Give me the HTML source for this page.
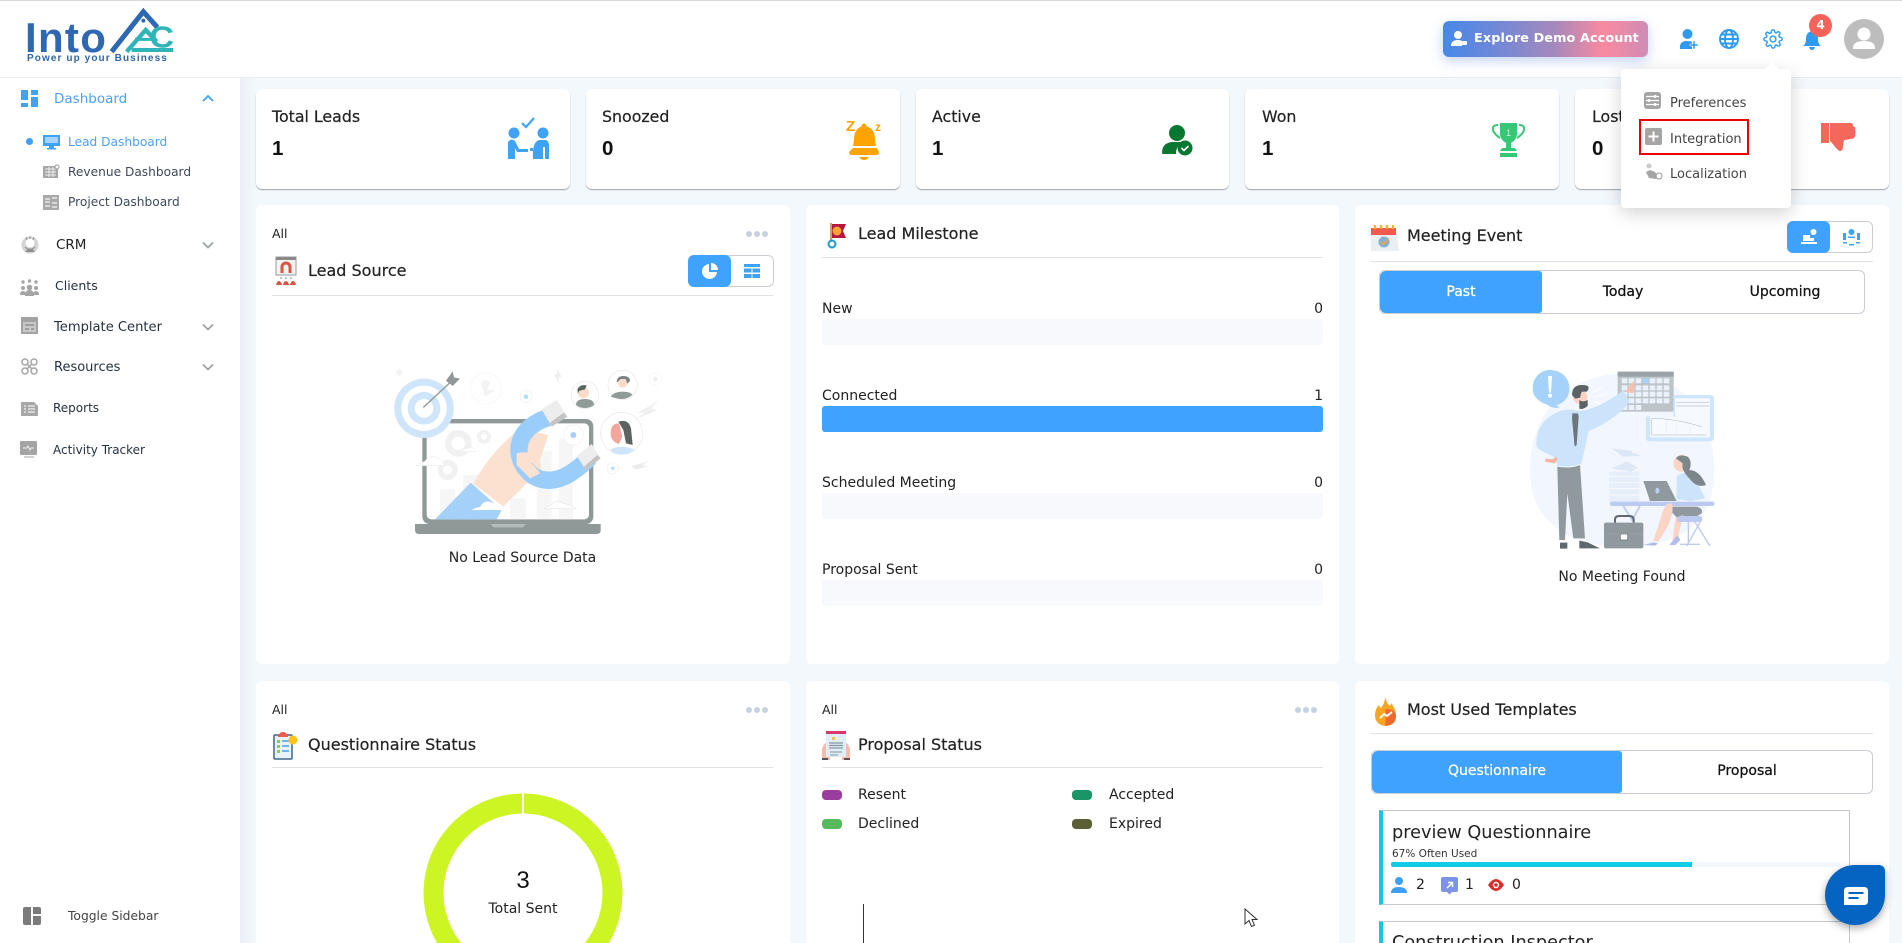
<!DOCTYPE html>
<html><head><meta charset="utf-8"><style>
html,body{margin:0;padding:0;width:1902px;height:943px;overflow:hidden;background:#fff;font-family:"DejaVu Sans","Liberation Sans",sans-serif;color:#222}
*{box-sizing:border-box}
#w{position:relative;width:1902px;height:943px;overflow:hidden;background:#fff}
.a{position:absolute}
.t{position:absolute;line-height:20px;height:20px;white-space:nowrap;font-size:13px;color:#222}
.card{position:absolute;background:#fff;border-radius:6px}
.stat{box-shadow:0 1px 1px #9aa3ad;top:89px;height:100px;width:314px}
.hr{position:absolute;height:1px;background:#dfe2e6}
.lbl{font-size:15.8px;-webkit-text-stroke:.2px #222}
.num{font:700 20.5px/20px "Liberation Sans",sans-serif;color:#111}
.ttl{font-size:16px;-webkit-text-stroke:.2px #222}
.m{font-size:14px}
.md{font-size:14px;-webkit-text-stroke:.25px currentColor}
.g{color:#3f4a5a;font-size:12.2px}
.bar{position:absolute;left:822px;width:501px;height:26px;background:#f7f9fd;border-radius:3px}
svg{position:absolute;overflow:visible}
.dots i{position:absolute;width:6px;height:6px;border-radius:50%;background:#c5d1e0;top:0}
</style></head><body><div id="w">
<div class="a" style="left:0;top:0;width:1902px;height:1px;background:#d8d8d8"></div>
<div class="a" style="left:0;top:77px;width:1902px;height:1px;background:#e9edf1"></div>
<div class="a" style="left:240px;top:78px;width:1662px;height:865px;background:linear-gradient(90deg,#ebf0f7 0,#f3f8fd 16px)"></div>

<!-- logo -->
<div class="t" style="left:25px;top:18px;height:40px;font:700 42px/40px 'Liberation Sans',sans-serif;color:#2e68b2;letter-spacing:1.3px">Into</div>
<svg style="left:0;top:0" width="200" height="70" viewBox="0 0 600 210">
<path d="M335 155L430 35L472 82" fill="none" stroke="#2e68b2" stroke-width="15"/>
<path d="M380 155L437 90L470 125" fill="none" stroke="#2fb4b8" stroke-width="13"/>
<path d="M395 150H520" stroke="#2fb4b8" stroke-width="12"/>
<path d="M405 118H455" stroke="#2fb4b8" stroke-width="9"/>
<circle cx="430" cy="62" r="6" fill="#2e68b2"/>
<text x="448" y="143" font-family="Liberation Sans" font-weight="700" font-size="92" fill="#2fb4b8" textLength="74" lengthAdjust="spacingAndGlyphs">C</text>
</svg>
<div class="t" style="left:27px;top:49px;font:700 10px/20px 'Liberation Sans',sans-serif;letter-spacing:1.1px;color:#2e68a8">Power up your Business</div>

<!-- sidebar -->
<svg style="left:21px;top:90px" width="17" height="17" fill="#3fa2f5"><rect width="7" height="10"/><rect x="10" width="7" height="5"/><rect y="13" width="7" height="4"/><rect x="10" y="7" width="7" height="10"/></svg>
<div class="t" style="left:54px;top:89px;font-size:13.5px;color:#4da0f5">Dashboard</div>
<svg style="left:202px;top:94px" width="12" height="9"><path d="M1 7L6 2L11 7" fill="none" stroke="#3fa2f5" stroke-width="1.8"/></svg>
<div class="a" style="left:26px;top:138px;width:7px;height:7px;border-radius:50%;background:#3f9ff5"></div>
<svg style="left:43px;top:135px" width="17" height="15"><rect width="17" height="11" fill="#3fa2f5"/><rect x="2" y="2" width="13" height="6" fill="#a6d3fb"/><rect x="6" y="11" width="5" height="2" fill="#3fa2f5"/><rect x="4" y="13" width="9" height="1.5" fill="#3fa2f5"/></svg>
<div class="t" style="left:68px;top:132px;font-size:12.2px;color:#4da0f5">Lead Dashboard</div>
<svg style="left:43px;top:164px" width="17" height="16"><rect y="2" width="15" height="12" fill="#a5a5a5"/><path d="M2 5h11M2 8h11M2 11h11M6 3v10M10 3v10" stroke="#eee"/><circle cx="14" cy="3" r="2" fill="#fff" stroke="#999"/></svg>
<div class="t g" style="left:68px;top:162px">Revenue Dashboard</div>
<svg style="left:43px;top:195px" width="16" height="15"><rect width="16" height="15" fill="#a9a9a9"/><path d="M2 4h5M2 7h5M2 11h5M9 3h5M9 8h5M9 12h5" stroke="#e8e8e8" stroke-width="1.5"/></svg>
<div class="t g" style="left:68px;top:192px">Project Dashboard</div>

<svg style="left:21px;top:235px" width="18" height="20"><circle cx="9" cy="10" r="8.5" fill="#d4d4d4"/><circle cx="9" cy="8" r="4.5" fill="#fff"/><path d="M4 17q5-7 10 0" fill="#8e8e8e"/><path d="M5 2l1 3M9 1v3M13 2l-1 3" stroke="#8e8e8e"/><path d="M4 12q5 5 10 0" fill="none" stroke="#8e8e8e"/></svg>
<div class="t" style="left:56px;top:235px;font-size:13.5px;color:#222">CRM</div>
<svg style="left:20px;top:277px" width="19" height="19" fill="#a5a5a5"><circle cx="3" cy="5" r="1.700"/><circle cx="9.500" cy="4" r="1.700"/><circle cx="16" cy="5" r="1.700"/><circle cx="3" cy="11" r="2"/><circle cx="16" cy="11" r="2"/><circle cx="9.500" cy="10.500" r="2.800"/><path d="M0 18q0-4 3-4t3 4zM13 18q0-4 3-4t3 4zM5 19q0-6 4.500-6t4.500 6z"/></svg>
<div class="t" style="left:55px;top:276px;font-size:12.5px;color:#263140">Clients</div>
<svg style="left:21px;top:317px" width="17" height="17"><rect width="17" height="17" rx="1" fill="#a2a2a2"/><rect x="2" y="5" width="13" height="10" fill="#c8c8c8"/><path d="M4 8h9M4 12h4M10 12h3" stroke="#8f8f8f" stroke-width="1.500"/></svg>
<div class="t" style="left:54px;top:318px;font-size:13.1px;color:#263140">Template Center</div>
<svg style="left:21px;top:358px" width="17" height="17" fill="none" stroke="#a5a5a5" stroke-width="1.500"><circle cx="4" cy="4" r="3"/><circle cx="13" cy="4" r="3"/><circle cx="4" cy="13" r="3"/><circle cx="13" cy="13" r="3"/><path d="M6 6l5 5M11 6l-5 5"/></svg>
<div class="t" style="left:54px;top:358px;font-size:13px;color:#263140">Resources</div>
<svg style="left:21px;top:401px" width="17" height="15"><path d="M0 1h13l4 4v10H0z" fill="#a8a8a8"/><path d="M3 5h2M7 5h7M3 8h2M7 8h7M3 11h2M7 11h7" stroke="#f0f0f0" stroke-width="1.300"/></svg>
<div class="t" style="left:53px;top:398px;font-size:12px;color:#263140">Reports</div>
<svg style="left:20px;top:441px" width="18" height="18"><rect width="17" height="14" rx="1" fill="#a4a4a4"/><path d="M3 7h4l1-2 2 4 1-2h3" fill="none" stroke="#eee"/><rect x="4" y="15" width="10" height="2" fill="#d0d0d0"/></svg>
<div class="t" style="left:53px;top:440px;font-size:12px;color:#263140">Activity Tracker</div>
<svg style="left:202px;top:241px" width="12" height="9"><path d="M1 1.500L6 6.500L11 1.500" fill="none" stroke="#9aa0a6" stroke-width="1.700"/></svg>
<svg style="left:202px;top:323px" width="12" height="9"><path d="M1 1.500L6 6.500L11 1.500" fill="none" stroke="#9aa0a6" stroke-width="1.700"/></svg>
<svg style="left:202px;top:363px" width="12" height="9"><path d="M1 1.500L6 6.500L11 1.500" fill="none" stroke="#9aa0a6" stroke-width="1.700"/></svg>
<svg style="left:23px;top:907px" width="18" height="18" fill="#7b7b7b"><path d="M2 0h6v18H2q-2 0-2-2V2q0-2 2-2zM10 0h6q2 0 2 2v5h-8zM10 9h8v7q0 2-2 2h-6z"/></svg>
<div class="t" style="left:68px;top:906px;font-size:12.3px;color:#444">Toggle Sidebar</div>

<!-- header -->
<div class="a" style="left:1443px;top:21px;width:205px;height:36px;border-radius:6px;background:linear-gradient(90deg,#4689e8 0,#6f88d8 25%,#a689bb 55%,#f98aa0 78%,#cf8db6 100%);box-shadow:0 4px 12px rgba(90,130,220,.35)"></div>
<svg style="left:1450px;top:31px" width="18" height="16" fill="#fff"><circle cx="8" cy="4" r="4"/><path d="M1 15q0-6 7-6 3 0 4 1v5z"/><rect x="12" y="10" width="5" height="4" rx="1"/></svg>
<div class="t" style="left:1474px;top:29px;font-size:12.8px;font-weight:700;color:#fff;letter-spacing:.1px">Explore Demo Account</div>
<svg style="left:1679px;top:29px" width="20" height="20" fill="#2e9bf0"><circle cx="8.500" cy="5" r="5"/><path d="M1 20q-1-8 7-8 4 0 5 1v7z"/><path d="M14 12h2v3h3v2h-3v3h-2v-3h-3v-2h3z" stroke="#fff" stroke-width=".5"/></svg>
<svg style="left:1719px;top:29px" width="20" height="20" fill="none" stroke="#2e9bf0" stroke-width="1.900"><circle cx="10" cy="10" r="9"/><ellipse cx="10" cy="10" rx="4" ry="9"/><path d="M1 10h18M2.500 5.500h15M2.500 14.500h15"/></svg>
<svg style="left:1763px;top:29px" width="20" height="20" viewBox="0 0 24 24" fill="none" stroke="#2e9bf0" stroke-width="1.700"><circle cx="12" cy="12" r="3.500"/><path d="M19.400 15a1.600 1.600 0 0 0 .3 1.800l.1.100a2 2 0 1 1-2.800 2.800l-.1-.1a1.600 1.600 0 0 0-2.700 1.100V21a2 2 0 1 1-4 0v-.1a1.600 1.600 0 0 0-2.700-1.100l-.1.100a2 2 0 1 1-2.800-2.800l.1-.1a1.600 1.600 0 0 0-1.100-2.700H3a2 2 0 1 1 0-4h.1a1.600 1.600 0 0 0 1.100-2.700l-.1-.1a2 2 0 1 1 2.800-2.800l.1.100a1.600 1.600 0 0 0 1.800.3H9a1.600 1.600 0 0 0 1-1.500V3a2 2 0 1 1 4 0v.1a1.600 1.600 0 0 0 2.700 1.100l.1-.1a2 2 0 1 1 2.800 2.800l-.1.100a1.600 1.600 0 0 0-.3 1.800V9a1.600 1.600 0 0 0 1.500 1H21a2 2 0 1 1 0 4h-.1a1.600 1.600 0 0 0-1.500 1z"/></svg>
<svg style="left:1803px;top:31px" width="18" height="19" fill="#2e9bf0"><path d="M9 0q6 1 6 8 0 5 3 7H0q3-2 3-7 0-7 6-8z"/><path d="M6 16h6q-1 3-3 3t-3-3z"/></svg>
<div class="a" style="left:1809px;top:14px;width:23px;height:23px;border-radius:50%;background:#f4625a;color:#fff;font-size:12px;font-weight:700;text-align:center;line-height:23px">4</div>
<svg style="left:1844px;top:19px" width="40" height="40"><circle cx="20" cy="20" r="20" fill="#bdbdbd"/><circle cx="20" cy="15" r="6.500" fill="#fff"/><path d="M9 29q0-7 11-7t11 7v1H9z" fill="#fff"/></svg>

<!-- stats -->
<div class="card stat" style="left:256px"></div>
<div class="card stat" style="left:586px"></div>
<div class="card stat" style="left:916px;width:313px"></div>
<div class="card stat" style="left:1245px"></div>
<div class="card stat" style="left:1575px"></div>
<div class="t lbl" style="left:272px;top:107px">Total Leads</div><div class="t num" style="left:272px;top:139px">1</div>
<div class="t lbl" style="left:602px;top:107px">Snoozed</div><div class="t num" style="left:602px;top:139px">0</div>
<div class="t lbl" style="left:932px;top:107px">Active</div><div class="t num" style="left:932px;top:139px">1</div>
<div class="t lbl" style="left:1262px;top:107px">Won</div><div class="t num" style="left:1262px;top:139px">1</div>
<div class="t lbl" style="left:1592px;top:107px">Lost</div><div class="t num" style="left:1592px;top:139px">0</div>
<svg style="left:508px;top:117px" width="42" height="43" fill="#3fa2f5"><circle cx="6" cy="16" r="5.500"/><circle cx="35" cy="16" r="5.500"/><path d="M0 25l2-2q3-1 5 1l4 8h9v3H9l-2-4v11H0z"/><path d="M25 42q-1-17 6-19h7q3 1 3 6v13h-4V30h-2v12z"/><rect x="22" y="31" width="3" height="3"/><path d="M14 6l4 4 8-9" fill="none" stroke="#3fa2f5" stroke-width="2.200"/></svg>
<svg style="left:846px;top:118px" width="37" height="44" fill="#ffa300"><path d="M18 8q11 1 11 14l1 6H7l1-6q0-13 10-14z"/><path d="M7 30h24l2 4q0 3-3 3H6q-3 0-3-3z"/><path d="M13 39h10q-2 3-5 3t-5-3z"/><circle cx="18" cy="8" r="2.500"/><text x="0" y="13" font-family="Liberation Sans" font-weight="700" font-size="15">Z</text><text x="29" y="13" font-family="Liberation Sans" font-weight="700" font-size="12">z</text></svg>
<svg style="left:1162px;top:125px" width="32" height="31" fill="#087830"><circle cx="15" cy="8" r="8"/><path d="M0 28q0-10 10-11h10q-6 4-6 12H2q-2 0-2-1z"/><circle cx="23" cy="23" r="7.500"/><path d="M19.500 23l2.500 2.500 4.500-4.500" fill="none" stroke="#fff" stroke-width="1.600"/></svg>
<svg style="left:1492px;top:123px" width="33" height="35" fill="#35c874"><path d="M8 0h17v10q0 8-8.500 11Q8 18 8 10z"/><path d="M6 2Q0 2 1 7q1 4 7 8M27 2q6 0 5 5-1 4-7 8" fill="none" stroke="#35c874" stroke-width="2"/><rect x="14" y="20" width="5" height="5"/><path d="M10 25h13l2 3H8z"/><rect x="8" y="30" width="17" height="4"/><text x="16.500" y="13" font-size="9" text-anchor="middle" fill="#c8f5d8" font-family="Liberation Sans">1</text></svg>
<svg style="left:1821px;top:123px" width="35" height="35" fill="#f4685c"><rect width="8" height="20"/><path d="M9 0h21q2 0 2 3 3 1 2 4 1 2 0 4 1 2-1 4-1 1-10 2l-1 6q0 5-3 5-2 0-8-8-2-2-2-3z"/></svg>

<!-- row 2 cards -->
<div class="card" style="left:256px;top:205px;width:534px;height:459px"></div>
<div class="card" style="left:806px;top:205px;width:533px;height:459px"></div>
<div class="card" style="left:1355px;top:205px;width:534px;height:459px"></div>

<!-- lead source -->
<div class="t" style="left:272px;top:224px;font-size:12.500px">All</div>
<div class="dots a" style="left:746px;top:231px"><i style="left:0"></i><i style="left:8px"></i><i style="left:16px"></i></div>
<svg style="left:276px;top:257px" width="20" height="28"><rect width="20" height="18" fill="#f3f3f3" stroke="#999"/><rect width="20" height="3" fill="#888"/><path d="M6 16v-6a4 4 0 0 1 8 0v6" fill="none" stroke="#d8553f" stroke-width="3"/><path d="M0 28q1-4 3-4t3 4zM7 28q1-4 3-4t3 4zM14 28q1-4 3-4t3 4z" fill="#d8553f"/><path d="M5 20v2M10 20v2M15 20v2" stroke="#888"/></svg>
<div class="t ttl" style="left:308px;top:261px">Lead Source</div>
<div class="a" style="left:688px;top:255px;width:86px;height:32px;border:1px solid #c9ced4;border-radius:6px"></div>
<div class="a" style="left:688px;top:255px;width:43px;height:32px;background:#3fa2ff;border-radius:6px"></div>
<svg style="left:702px;top:263px" width="16" height="16" fill="#fff"><path d="M7 1a7.500 7.500 0 1 0 8 8H7z"/><path d="M9 0a7 7 0 0 1 7 7H9z"/></svg>
<svg style="left:744px;top:264px" width="16" height="14" fill="#3fa2f5"><rect width="16" height="3"/><rect y="4.500" width="7.500" height="4"/><rect x="8.500" y="4.500" width="7.500" height="4"/><rect y="10" width="7.500" height="4"/><rect x="8.500" y="10" width="7.500" height="4"/></svg>
<div class="hr" style="left:272px;top:295px;width:501px"></div>

<svg style="left:360px;top:350px" width="320" height="230" viewBox="0 0 960 690">
<rect x="187" y="207" width="513" height="315" rx="22" fill="#8f9997"/><rect x="200" y="220" width="487" height="288" rx="14" fill="#fff"/>
<rect x="240" y="418" width="45" height="90" fill="#f6f6f6"/><rect x="310" y="375" width="45" height="133" fill="#f6f6f6"/><rect x="450" y="445" width="48" height="63" fill="#f6f6f6"/><rect x="530" y="305" width="45" height="203" fill="#f6f6f6"/><rect x="597" y="265" width="42" height="243" fill="#f6f6f6"/>
<circle cx="295" cy="280" r="30" fill="none" stroke="#f1f1f1" stroke-width="20"/><circle cx="372" cy="260" r="15" fill="none" stroke="#f1f1f1" stroke-width="12"/><circle cx="263" cy="360" r="22" fill="none" stroke="#f1f1f1" stroke-width="16"/>
<path d="M165 522h557v18q0 12-12 12H177q-12 0-12-12z" fill="#8f9997"/><path d="M392 522h105l-8 10h-88z" fill="#b3bcba"/>
<path d="M225 508L332 398L425 480L410 508z" fill="#a4d0fa"/>
<path d="M340 400C370 350 400 300 480 235L565 255L540 330L545 370L500 400L430 470z" fill="#fde1d0"/>
<path d="M575 200C470 225 445 320 520 378C585 415 645 365 690 322" fill="none" stroke="#9bcdfb" stroke-width="52"/>
<path d="M590 150L622 200L575 230L545 178z" fill="#ededed"/><path d="M622 200L575 230L570 218L612 188z" fill="#c4c4c4"/>
<path d="M695 282L722 325L678 360L650 318z" fill="#ededed"/><path d="M722 325L678 360L672 350L712 315z" fill="#c4c4c4"/>
<path d="M470 310q30-8 50 5l-5 25q15 15 25 30l-30 15-40-40z" fill="#fde1d0"/>
<circle cx="192" cy="175" r="89" fill="#cfe5fb"/><circle cx="192" cy="175" r="68" fill="#fff"/><circle cx="192" cy="175" r="49" fill="#cfe5fb"/><circle cx="192" cy="175" r="28" fill="#fff"/>
<path d="M190 172L270 98" stroke="#8f9997" stroke-width="4"/><path d="M258 92L278 64L282 82L300 86L278 108z" fill="#8f9997"/>
<circle cx="378" cy="115" r="47" fill="none" stroke="#f6f6f6" stroke-width="2"/><path d="M362 100a15 15 0 0 1 28 0l-10 20 25 0-30 20z" fill="#f3f3f3"/>
<circle cx="498" cy="140" r="18" fill="none" stroke="#eee" stroke-width="2"/><circle cx="498" cy="140" r="7" fill="#b9dcfb"/>
<circle cx="640" cy="255" r="30" fill="#fff" stroke="#eee" stroke-width="2"/><circle cx="640" cy="255" r="9" fill="#a4d0fa"/>
<circle cx="758" cy="355" r="17" fill="#fff" stroke="#eee" stroke-width="2"/><circle cx="758" cy="355" r="5" fill="#b9dcfb"/>
<circle cx="886" cy="87" r="18" fill="#fff" stroke="#f5f5f5" stroke-width="2"/><circle cx="886" cy="87" r="7" fill="#f0f0f0"/>
<path d="M118 55l12 12-12 12-12-12z" fill="#f3f3f3"/>
<path d="M590 55l15 25-10 5 5 20-18-30 10-3z" fill="#efefef"/><path d="M830 190l65-38-22 24 20 5-62 25 22-18z" fill="#f0f0f0"/><path d="M815 348l50-14-18 12 18 4-40 8z" fill="#ececec"/>
<circle cx="675" cy="135" r="41" fill="#fff" stroke="#e6e6e6" stroke-width="2"/><path d="M648 165q0-18 27-18t27 18q-12 9-27 9t-27-9z" fill="#919c99"/><circle cx="670" cy="128" r="17" fill="#fbdccb"/><path d="M652 120q5-18 28-14l-5 12-18 5-3 8z" fill="#5c6462"/>
<circle cx="788" cy="105" r="44" fill="#fff" stroke="#e6e6e6" stroke-width="2"/><path d="M752 140q10-15 35-15t30 10q-15 12-30 12t-35-7z" fill="#919c99"/><circle cx="788" cy="98" r="15" fill="#fbdccb"/><path d="M770 98q0-20 20-20t20 15l-8 8-5-14-15 0z" fill="#7b8482"/>
<circle cx="785" cy="250" r="63" fill="#fff" stroke="#e6e6e6" stroke-width="2"/><path d="M750 300q30-20 75 0-20 14-40 14t-35-14z" fill="#cfe5fb"/><path d="M752 250q0-30 25-30l10 40-10 22q-25-8-25-32z" fill="#f3a79c"/><path d="M775 215q30-10 38 20l5 50-20-5-8-40z" fill="#5c6462"/>
<path d="M168 347q10-10 25-12 15-22 40-12 15 5 22 24z" fill="#fff" stroke="#e5e5e5" stroke-width="1.500"/>
<path d="M335 480q12-8 25-9 15-28 42-10 15 5 28 19z" fill="#fff"/>
<path d="M552 476q10-8 20-9 15-22 35-8 25 5 42 17z" fill="#fff" stroke="#e0e0e0" stroke-width="1.500"/>
<path d="M300 305q10-10 20-8 15-14 28 8z" fill="#fff" stroke="#e8e8e8" stroke-width="1.500"/>
</svg>
<div class="t m" style="left:272px;top:548px;width:501px;text-align:center">No Lead Source Data</div>

<!-- milestone -->
<svg style="left:828px;top:222px" width="18" height="27"><path d="M3 1v19" stroke="#c9a06c" stroke-width="2"/><path d="M4 2h14l-3 7 3 7H4z" fill="#b8153f"/><circle cx="9" cy="9" r="4.500" fill="#f7a330"/><circle cx="4" cy="22" r="3.500" fill="none" stroke="#1d9ccc" stroke-width="2"/></svg>
<div class="t ttl" style="left:858px;top:224px">Lead Milestone</div>
<div class="hr" style="left:822px;top:257px;width:501px"></div>
<div class="t m" style="left:822px;top:299px">New</div><div class="t m" style="right:579px;top:299px">0</div><div class="bar" style="top:319px"></div>
<div class="t m" style="left:822px;top:386px">Connected</div><div class="t m" style="right:579px;top:386px">1</div><div class="bar" style="top:406px;background:#3fa2ff"></div>
<div class="t m" style="left:822px;top:473px">Scheduled Meeting</div><div class="t m" style="right:579px;top:473px">0</div><div class="bar" style="top:493px"></div>
<div class="t m" style="left:822px;top:560px">Proposal Sent</div><div class="t m" style="right:579px;top:560px">0</div><div class="bar" style="top:580px"></div>

<!-- meeting -->
<svg style="left:1371px;top:224px" width="28" height="27"><path d="M0 5h25l3 22H0z" fill="#eceff1"/><rect y="4" width="25" height="7" fill="#ef5a4c"/><path d="M4 5V1M10 5V1M16 5V1M22 5V1" stroke="#f2b233" stroke-width="2.400"/><circle cx="13" cy="18" r="5.500" fill="#7fb1dc"/><path d="M10 18l2.500 2.500 5-6" fill="none" stroke="#f2a533" stroke-width="1.700"/></svg>
<div class="t ttl" style="left:1407px;top:226px">Meeting Event</div>
<div class="a" style="left:1787px;top:221px;width:86px;height:32px;border:1px solid #c9ced4;border-radius:6px"></div>
<div class="a" style="left:1787px;top:221px;width:43px;height:32px;background:#3fa2ff;border-radius:6px"></div>
<svg style="left:1801px;top:229px" width="16" height="16" fill="#fff"><circle cx="12.500" cy="3" r="3"/><path d="M2 6h7v3h4v3H2z"/><rect y="13" width="16" height="2"/></svg>
<svg style="left:1843px;top:229px" width="17" height="17" fill="#3fa2f5"><circle cx="8.500" cy="3" r="3"/><rect y="4" width="3" height="7"/><rect x="14" y="4" width="3" height="7"/><rect x="5" y="7.500" width="7" height="1.500"/><path d="M0 13h4v1.500H0zM13 13h4v1.500h-4zM6 15h5v1.500H6z"/></svg>
<div class="hr" style="left:1371px;top:261px;width:502px"></div>
<div class="a" style="left:1379px;top:270px;width:486px;height:44px;border:1px solid #c9ced4;border-radius:6px"></div>
<div class="a" style="left:1380px;top:271px;width:162px;height:42px;background:#3fa2ff;border-radius:6px 3px 3px 6px"></div>
<div class="t md" style="left:1380px;top:282px;width:162px;text-align:center;color:#fff">Past</div>
<div class="t md" style="left:1542px;top:282px;width:162px;text-align:center;color:#111">Today</div>
<div class="t md" style="left:1704px;top:282px;width:162px;text-align:center;color:#111">Upcoming</div>

<svg style="left:1480px;top:350px" width="260" height="240" viewBox="0 0 780 720">
<path d="M150 360C150 170 280 70 440 70C610 70 703 200 703 360C703 520 600 590 430 590C270 590 150 520 150 360z" fill="#f2f6fe"/>
<path d="M208 60c35 0 60 22 60 55s-25 48-40 50l10 8c-15 2-28-2-38-10-25-8-42-25-42-48 0-33 25-55 50-55z" fill="#a4d2fb"/><path d="M204 78h12l-3 50h-6z" fill="#fff"/><circle cx="210" cy="137" r="6" fill="#fff"/>
<rect x="413" y="65" width="168" height="120" fill="#bcc4c8"/><rect x="413" y="65" width="168" height="15" fill="#9aa3a7"/>
<g fill="#eaf1fb"><rect x="425" y="85" width="17" height="15"/><rect x="446" y="85" width="17" height="15"/><rect x="467" y="85" width="17" height="15"/><rect x="488" y="85" width="17" height="15" fill="#a4d2fb"/><rect x="509" y="85" width="17" height="15"/><rect x="530" y="85" width="17" height="15"/><rect x="551" y="85" width="17" height="15"/>
<rect x="425" y="106" width="17" height="15"/><rect x="446" y="106" width="17" height="15"/><rect x="467" y="106" width="17" height="15"/><rect x="488" y="106" width="17" height="15"/><rect x="509" y="106" width="17" height="15"/><rect x="530" y="106" width="17" height="15"/><rect x="551" y="106" width="17" height="15"/>
<rect x="425" y="125" width="17" height="15"/><rect x="446" y="125" width="17" height="15"/><rect x="467" y="125" width="17" height="15"/><rect x="488" y="125" width="17" height="15"/><rect x="509" y="125" width="17" height="15"/><rect x="530" y="125" width="17" height="15"/><rect x="551" y="125" width="17" height="15"/>
<rect x="425" y="145" width="17" height="15"/><rect x="446" y="145" width="17" height="15"/><rect x="467" y="145" width="17" height="15"/><rect x="488" y="145" width="17" height="15"/><rect x="509" y="145" width="17" height="15"/><rect x="530" y="145" width="17" height="15"/><rect x="551" y="145" width="17" height="15"/>
<rect x="425" y="165" width="17" height="15"/><rect x="446" y="165" width="17" height="15"/><rect x="467" y="165" width="17" height="15"/></g>
<path d="M498 135H690q12 0 12 12V262q0 12-12 12H510q-12 0-12-12V200H580V135z" fill="#cde5fd"/><path d="M510 200H585V145H690V262H510z" fill="#f6faff"/>
<path d="M588 157h100M588 168h100" stroke="#b6bfd8" stroke-width="2"/><path d="M515 205v50h165M515 205q70 0 150 25" fill="none" stroke="#a4b0c5" stroke-width="1.500"/><path d="M560 205v50M590 215v40M630 222v33" stroke="#c7cfdd" stroke-dasharray="3 3"/>
<path d="M436 125l25-32 3 12-4 25z" fill="#f7c0b0"/>
<path d="M170 290C165 215 220 185 262 178L305 183C345 175 395 150 430 120L448 155C415 205 345 235 325 245L305 340C280 350 255 352 232 346L222 300L235 325L220 320C205 310 180 305 170 290z" fill="#cbe4fb"/>
<path d="M195 335l30 5 8-12-4-8-12 8-20-2z" fill="#f6b4a3"/>
<path d="M277 190h17l2 10-6 85-6 5-8-85z" fill="#6d777b"/>
<path d="M232 350C260 355 285 352 300 345L315 565H280L262 430L255 570H238z" fill="#8f999e"/>
<path d="M240 578h22v18h-22zM298 572l25 5 37 18h-62z" fill="#5f686c"/>
<circle cx="300" cy="140" r="22" fill="#fbd4c5"/><path d="M276 135q0-30 30-30t15 20h-15q-5 8-5 18l-15 3zM298 150q10 8 25 0v18q-15 12-25 8z" fill="#5a6266"/>
<path d="M335 130l30-18M340 142l38-10M340 156l25 4" stroke="#fff" stroke-width="3"/>
<path d="M395 295l65 8 20 15-50 2z" fill="#dce6f4"/><path d="M455 300q40 10 72-15-20 30-70 25z" fill="#f3f7fd"/>
<rect x="388" y="365" width="90" height="90" fill="#e6eef9"/><path d="M388 380h90M388 398h90M388 415h90M388 435h90" stroke="#fff" stroke-width="2"/><path d="M392 355l50-20 32 18-20 12z" fill="#dfe8f5"/>
<rect x="390" y="455" width="313" height="13" rx="6" fill="#bcc9f1"/><path d="M430 468l28 45M480 468l-25 45" stroke="#bcc9f1" stroke-width="5"/>
<path d="M490 393h70l30 60h-80z" fill="#8f999e"/><ellipse cx="532" cy="422" rx="6" ry="9" fill="#b9d2ef"/>
<path d="M590 380c15-18 50-15 60 15l25 50-40 8-45-5z" fill="#cbe4fb"/>
<path d="M560 470h90q20 5 15 20l-20 12-55 0z" fill="#8f999e"/>
<path d="M575 460q10 25-15 75l-25 40-15-3 20-60q5-25 20-50z" fill="#fbd4c5"/><path d="M610 495l-20 80-13-2 10-70z" fill="#fbd4c5"/>
<path d="M490 585l30-8 15 3-10 7zM568 585l25-30 8 15-15 15z" fill="#b2bce9"/>
<rect x="592" y="498" width="75" height="18" rx="8" fill="#bcc9f1"/><path d="M625 516v65M620 588l45-80M640 508l50 80M600 583h60" stroke="#bcc9f1" stroke-width="4"/>
<circle cx="605" cy="340" r="25" fill="#fbd4c5"/><path d="M588 325q10-15 35-5 15 15 5 40 30 0 50 45-28 10-50-20-25-25-20-45z" fill="#7c868b"/>
<rect x="372" y="518" width="118" height="77" rx="6" fill="#8f999e"/><path d="M405 518v-8q0-12 12-12h32q12 0 12 12v8" fill="none" stroke="#5f686c" stroke-width="6"/><rect x="421" y="552" width="22" height="18" fill="#fff" stroke="#5f686c" stroke-width="2"/><path d="M372 552h118" stroke="#c0c7cb" stroke-dasharray="3 3"/>
</svg>
<div class="t m" style="left:1355px;top:567px;width:534px;text-align:center">No Meeting Found</div>

<!-- row 3 -->
<div class="card" style="left:256px;top:681px;width:534px;height:270px"></div>
<div class="card" style="left:806px;top:681px;width:533px;height:270px"></div>
<div class="card" style="left:1355px;top:681px;width:534px;height:270px"></div>

<div class="t" style="left:272px;top:700px;font-size:12.500px">All</div>
<div class="dots a" style="left:746px;top:707px"><i style="left:0"></i><i style="left:8px"></i><i style="left:16px"></i></div>
<svg style="left:274px;top:731px" width="24" height="28"><rect y="4" width="18" height="24" rx="1" fill="#eaf3fb" stroke="#40658c" stroke-width="1.500"/><path d="M5 5q0-4 4-4t4 4z M4 3h10v3H4z" fill="#ef5a50"/><path d="M3 9h3v3H3zM3 14h3v3H3zM3 19h3v3H3z" fill="#8cc84b"/><path d="M8 10h7M8 15h7M8 20h7" stroke="#43a5e8" stroke-width="1.600"/><circle cx="19" cy="9" r="4.500" fill="#fcc419"/></svg>
<div class="t ttl" style="left:308px;top:735px">Questionnaire Status</div>
<div class="hr" style="left:272px;top:767px;width:501px"></div>
<svg style="left:420px;top:790px" width="206" height="153" viewBox="0 0 206 153"><circle cx="103" cy="103" r="89.500" fill="none" stroke="#cdf524" stroke-width="20"/><rect x="102" y="2" width="2" height="22" fill="#fff"/></svg>
<div class="t" style="left:423px;top:871px;width:200px;text-align:center;font:24px/20px 'Liberation Sans',sans-serif;color:#111">3</div>
<div class="t m" style="left:423px;top:899px;width:200px;text-align:center">Total Sent</div>

<div class="t" style="left:822px;top:700px;font-size:12.500px">All</div>
<div class="dots a" style="left:1295px;top:707px"><i style="left:0"></i><i style="left:8px"></i><i style="left:16px"></i></div>
<svg style="left:822px;top:731px" width="28" height="29"><path d="M0 18q2-6 5-7l3 6v12H0zM28 18q-2-6-5-7l-3 6v12h8z" fill="#f7bcae"/><rect x="4" y="1" width="20" height="25" fill="#dfeef9"/><rect x="4" y="0" width="20" height="3" fill="#d8396a"/><rect x="10" y="6" width="3" height="3" fill="#f2c14e"/><path d="M7 12h14M7 14.500h14M7 17h14" stroke="#8a949c" stroke-width="1.300"/><path d="M8 21h12M8 24h8" stroke="#8a949c"/><rect y="27" width="6" height="2" fill="#555"/><rect x="22" y="27" width="6" height="2" fill="#555"/></svg>
<div class="t ttl" style="left:858px;top:735px">Proposal Status</div>
<div class="hr" style="left:822px;top:767px;width:501px"></div>
<div class="a" style="left:822px;top:790px;width:20px;height:10px;border-radius:4px;background:#993d9f"></div><div class="t m" style="left:858px;top:785px">Resent</div>
<div class="a" style="left:1072px;top:790px;width:20px;height:10px;border-radius:4px;background:#1b9468"></div><div class="t m" style="left:1109px;top:785px">Accepted</div>
<div class="a" style="left:822px;top:819px;width:20px;height:10px;border-radius:4px;background:#57b95d"></div><div class="t m" style="left:858px;top:814px">Declined</div>
<div class="a" style="left:1072px;top:819px;width:20px;height:10px;border-radius:4px;background:#5c5f35"></div><div class="t m" style="left:1109px;top:814px">Expired</div>
<div class="a" style="left:863px;top:904px;width:1px;height:39px;background:#333"></div>
<svg style="left:1244px;top:908px" width="13" height="20"><path d="M1 1v15l4-3.500 2.500 6 3-1.300-2.500-5.700h5z" fill="#fff" stroke="#333" stroke-width="1"/></svg>

<svg style="left:1375px;top:697px" width="21" height="29"><path d="M10 0q2 7 5 9 1-2 1-3 5 6 5 13 0 9-10 10Q0 28 0 18 0 12 4 8q1 3 2 3 4-5 4-11z" fill="#f7a521"/><path d="M10.500 12q10 0 10.500 7 0 9-10.500 10z" fill="#f2692d"/><path d="M5 21l4-4 3 2 5-4" fill="none" stroke="#fff" stroke-width="2"/></svg>
<div class="t ttl" style="left:1407px;top:700px">Most Used Templates</div>
<div class="hr" style="left:1371px;top:733px;width:502px"></div>
<div class="a" style="left:1371px;top:750px;width:502px;height:44px;border:1px solid #c9ced4;border-radius:6px"></div>
<div class="a" style="left:1372px;top:751px;width:250px;height:42px;background:#3fa2ff;border-radius:6px 3px 3px 6px"></div>
<div class="t md" style="left:1372px;top:761px;width:250px;text-align:center;color:#fff">Questionnaire</div>
<div class="t md" style="left:1622px;top:761px;width:250px;text-align:center;color:#111">Proposal</div>

<div class="a" style="left:1379px;top:810px;width:471px;height:95px;border:1px solid #c8c8c8;border-left:4px solid #14c8e0"></div>
<div class="t" style="left:1392px;top:823px;font-size:17.700px">preview Questionnaire</div>
<div class="t" style="left:1392px;top:844px;font-size:10.500px;color:#333">67% Often Used</div>
<div class="a" style="left:1391px;top:862px;width:450px;height:5px;background:#f2f7fb;border-radius:2px"></div>
<div class="a" style="left:1391px;top:862px;width:301px;height:5px;background:#12cbe4;border-radius:2px 0 0 2px"></div>
<svg style="left:1391px;top:877px" width="16" height="16" fill="#3e9ff2"><circle cx="8" cy="4" r="4"/><path d="M0 16q0-6 8-6t8 6z"/></svg>
<div class="t" style="left:1416px;top:875px;font-size:14px">2</div>
<svg style="left:1441px;top:877px" width="18" height="18"><path d="M2 0h13q2 0 2 2v11q0 2-2 2h-4l-2.500 2.500L6 15H2q-2 0-2-2V2q0-2 2-2z" fill="#7d93e6"/><path d="M6 11l5-5M7 5.500h4.500V10" fill="none" stroke="#fff" stroke-width="1.500"/></svg>
<div class="t" style="left:1465px;top:875px;font-size:14px">1</div>
<svg style="left:1488px;top:879px" width="16" height="12"><path d="M0 6q4-6 8-6t8 6q-4 6-8 6T0 6z" fill="#d92f2b"/><circle cx="8" cy="6" r="3.200" fill="#fff"/><circle cx="8" cy="6" r="1.800" fill="#d92f2b"/></svg>
<div class="t" style="left:1512px;top:875px;font-size:14px">0</div>

<div class="a" style="left:1379px;top:921px;width:471px;height:40px;border:1px solid #c8c8c8;border-left:4px solid #14c8e0"></div>
<div class="t" style="left:1392px;top:933px;font-size:17.700px">Construction Inspector</div>

<div class="a" style="left:1825px;top:865px;width:60px;height:60px;background:#0563c1;border-radius:50% 6px 50% 50%;box-shadow:0 3px 8px rgba(0,0,0,.35)"></div>
<svg style="left:1844px;top:887px" width="24" height="18"><path d="M4 0h16q4 0 4 4v10q0 4-4 4H0V4q0-4 4-4z" fill="#fff"/><path d="M4.500 6h15M4.500 11h10" stroke="#0563c1" stroke-width="2"/></svg>

<!-- dropdown -->
<div class="a" style="left:1621px;top:69px;width:170px;height:139px;background:#fff;border-radius:4px;box-shadow:0 5px 18px rgba(0,0,0,.18)"></div>
<svg style="left:1764px;top:62px" width="16" height="8"><path d="M0 8L8 0L16 8z" fill="#fff"/></svg>
<svg style="left:1644px;top:92px" width="17" height="17"><rect width="17" height="17" rx="3" fill="#a5a5a5"/><path d="M2 4.500h13M2 8.500h13M2 12.500h13" stroke="#fff" stroke-width="1.200"/><circle cx="11" cy="4.500" r="1.500" fill="#fff"/><circle cx="5" cy="8.500" r="1.500" fill="#fff"/><circle cx="11" cy="12.500" r="1.500" fill="#fff"/></svg>
<div class="t" style="left:1670px;top:94px;color:#444">Preferences</div>
<div class="a" style="left:1639px;top:119px;width:110px;height:36px;border:2px solid #ee0000"></div>
<svg style="left:1645px;top:128px" width="17" height="17"><rect width="17" height="17" rx="2" fill="#a5a5a5"/><path d="M8.500 3.500v10M3.500 8.500h10" stroke="#fff" stroke-width="2"/></svg>
<div class="t" style="left:1670px;top:130px;color:#444">Integration</div>
<svg style="left:1645px;top:163px" width="17" height="17" fill="#a5a5a5"><circle cx="4" cy="3" r="2.500" fill="#ccc"/><path d="M1 9l4-2 5 2 3 4-2 3-7-1z"/><circle cx="14" cy="13" r="3" fill="#fff" stroke="#999"/></svg>
<div class="t" style="left:1670px;top:165px;color:#444">Localization</div>
</div></body></html>
